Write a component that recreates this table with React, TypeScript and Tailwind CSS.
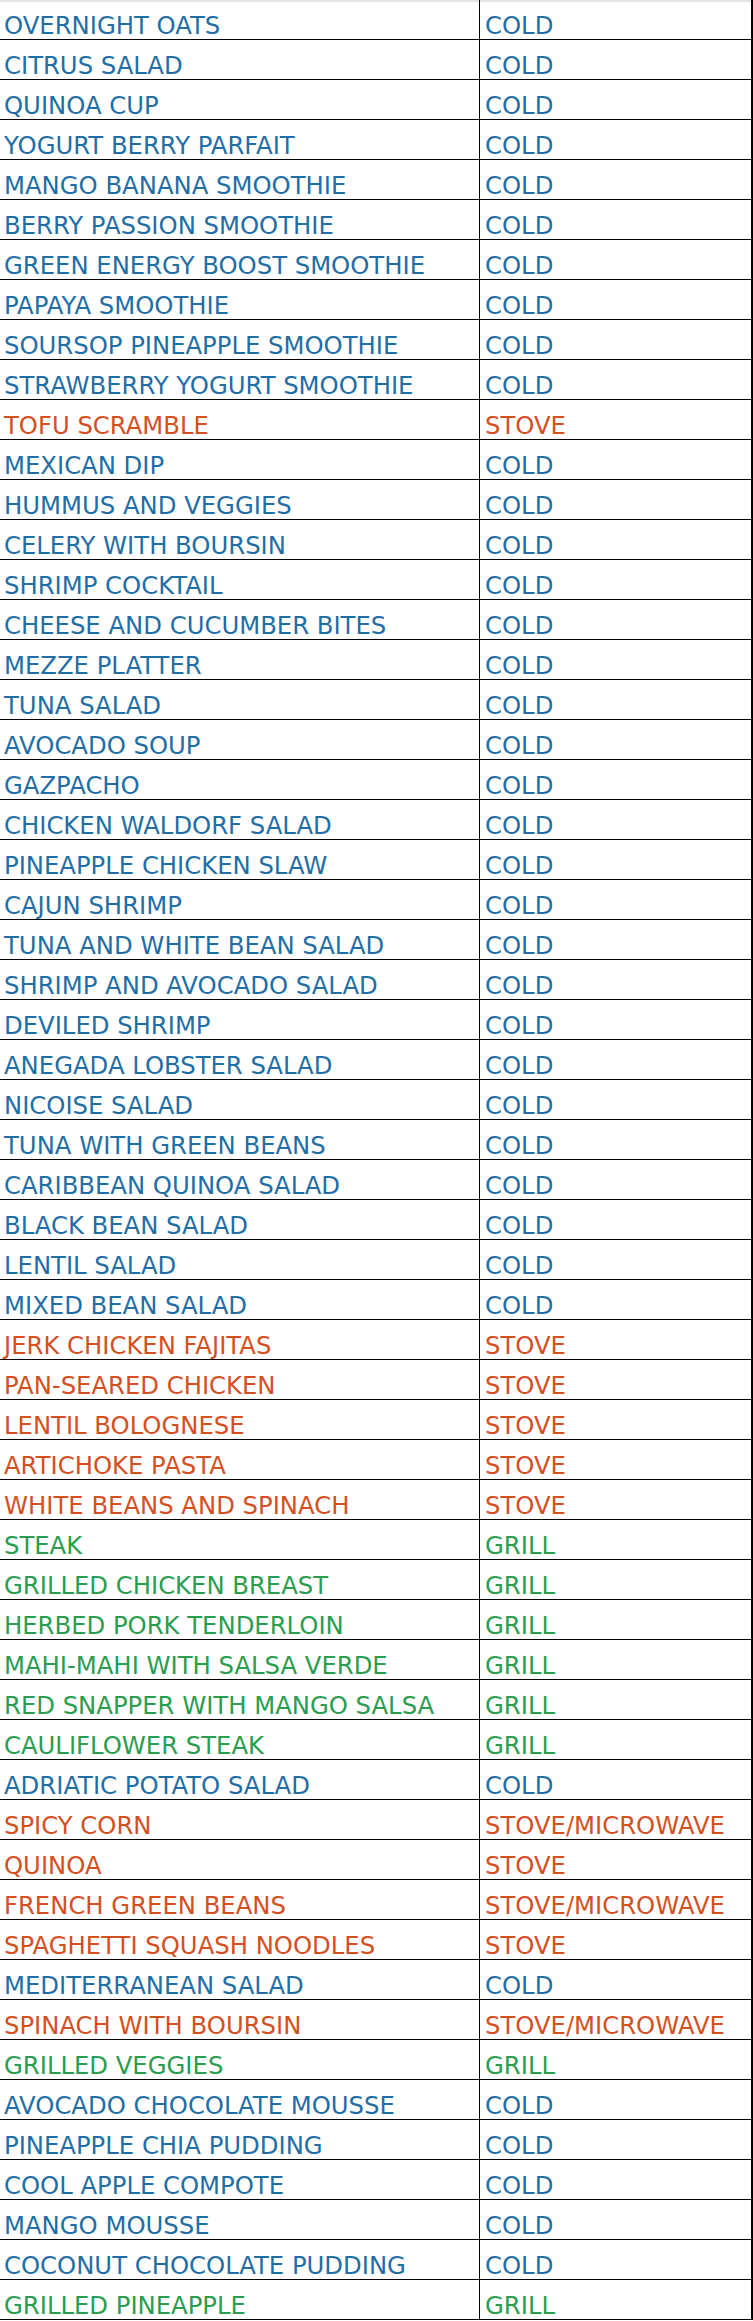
type Method = "COLD" | "STOVE" | "GRILL" | "STOVE/MICROWAVE";

const rows: [string, Method][] = [
  ["OVERNIGHT OATS", "COLD"],
  ["CITRUS SALAD", "COLD"],
  ["QUINOA CUP", "COLD"],
  ["YOGURT BERRY PARFAIT", "COLD"],
  ["MANGO BANANA SMOOTHIE", "COLD"],
  ["BERRY PASSION SMOOTHIE", "COLD"],
  ["GREEN ENERGY BOOST SMOOTHIE", "COLD"],
  ["PAPAYA SMOOTHIE", "COLD"],
  ["SOURSOP PINEAPPLE SMOOTHIE", "COLD"],
  ["STRAWBERRY YOGURT SMOOTHIE", "COLD"],
  ["TOFU SCRAMBLE", "STOVE"],
  ["MEXICAN DIP", "COLD"],
  ["HUMMUS AND VEGGIES", "COLD"],
  ["CELERY WITH BOURSIN", "COLD"],
  ["SHRIMP COCKTAIL", "COLD"],
  ["CHEESE AND CUCUMBER BITES", "COLD"],
  ["MEZZE PLATTER", "COLD"],
  ["TUNA SALAD", "COLD"],
  ["AVOCADO SOUP", "COLD"],
  ["GAZPACHO", "COLD"],
  ["CHICKEN WALDORF SALAD", "COLD"],
  ["PINEAPPLE CHICKEN SLAW", "COLD"],
  ["CAJUN SHRIMP", "COLD"],
  ["TUNA AND WHITE BEAN SALAD", "COLD"],
  ["SHRIMP AND AVOCADO SALAD", "COLD"],
  ["DEVILED SHRIMP", "COLD"],
  ["ANEGADA LOBSTER SALAD", "COLD"],
  ["NICOISE SALAD", "COLD"],
  ["TUNA WITH GREEN BEANS", "COLD"],
  ["CARIBBEAN QUINOA SALAD", "COLD"],
  ["BLACK BEAN SALAD", "COLD"],
  ["LENTIL SALAD", "COLD"],
  ["MIXED BEAN SALAD", "COLD"],
  ["JERK CHICKEN FAJITAS", "STOVE"],
  ["PAN-SEARED CHICKEN", "STOVE"],
  ["LENTIL BOLOGNESE", "STOVE"],
  ["ARTICHOKE PASTA", "STOVE"],
  ["WHITE BEANS AND SPINACH", "STOVE"],
  ["STEAK", "GRILL"],
  ["GRILLED CHICKEN BREAST", "GRILL"],
  ["HERBED PORK TENDERLOIN", "GRILL"],
  ["MAHI-MAHI WITH SALSA VERDE", "GRILL"],
  ["RED SNAPPER WITH MANGO SALSA", "GRILL"],
  ["CAULIFLOWER STEAK", "GRILL"],
  ["ADRIATIC POTATO SALAD", "COLD"],
  ["SPICY CORN", "STOVE/MICROWAVE"],
  ["QUINOA", "STOVE"],
  ["FRENCH GREEN BEANS", "STOVE/MICROWAVE"],
  ["SPAGHETTI SQUASH NOODLES", "STOVE"],
  ["MEDITERRANEAN SALAD", "COLD"],
  ["SPINACH WITH BOURSIN", "STOVE/MICROWAVE"],
  ["GRILLED VEGGIES", "GRILL"],
  ["AVOCADO CHOCOLATE MOUSSE", "COLD"],
  ["PINEAPPLE CHIA PUDDING", "COLD"],
  ["COOL APPLE COMPOTE", "COLD"],
  ["MANGO MOUSSE", "COLD"],
  ["COCONUT CHOCOLATE PUDDING", "COLD"],
  ["GRILLED PINEAPPLE", "GRILL"],
];

// colour follows the cooking method
const colorFor = (m: Method) => {
  if (m === "COLD") return "text-[#1f6ea6]";
  if (m === "GRILL") return "text-[#2a9e4e]";
  return "text-[#d5501f]";
};

export default function App() {
  return (
    <div className="w-[753px] bg-white border-r-2 border-black shadow-[inset_0_2px_0_#e4e4e4] font-['DejaVu_Sans',Verdana,sans-serif] text-[24.3px] leading-[23px]">
      {rows.map(([dish, method], i) => (
        <div key={i} className={`flex h-10 border-b border-black ${colorFor(method)}`}>
          <div className="w-[480px] shrink-0 border-r border-black pl-1 pt-[14px] whitespace-nowrap">
            {dish}
          </div>
          <div className="flex-1 pl-[5px] pt-[14px] whitespace-nowrap">{method}</div>
        </div>
      ))}
    </div>
  );
}
